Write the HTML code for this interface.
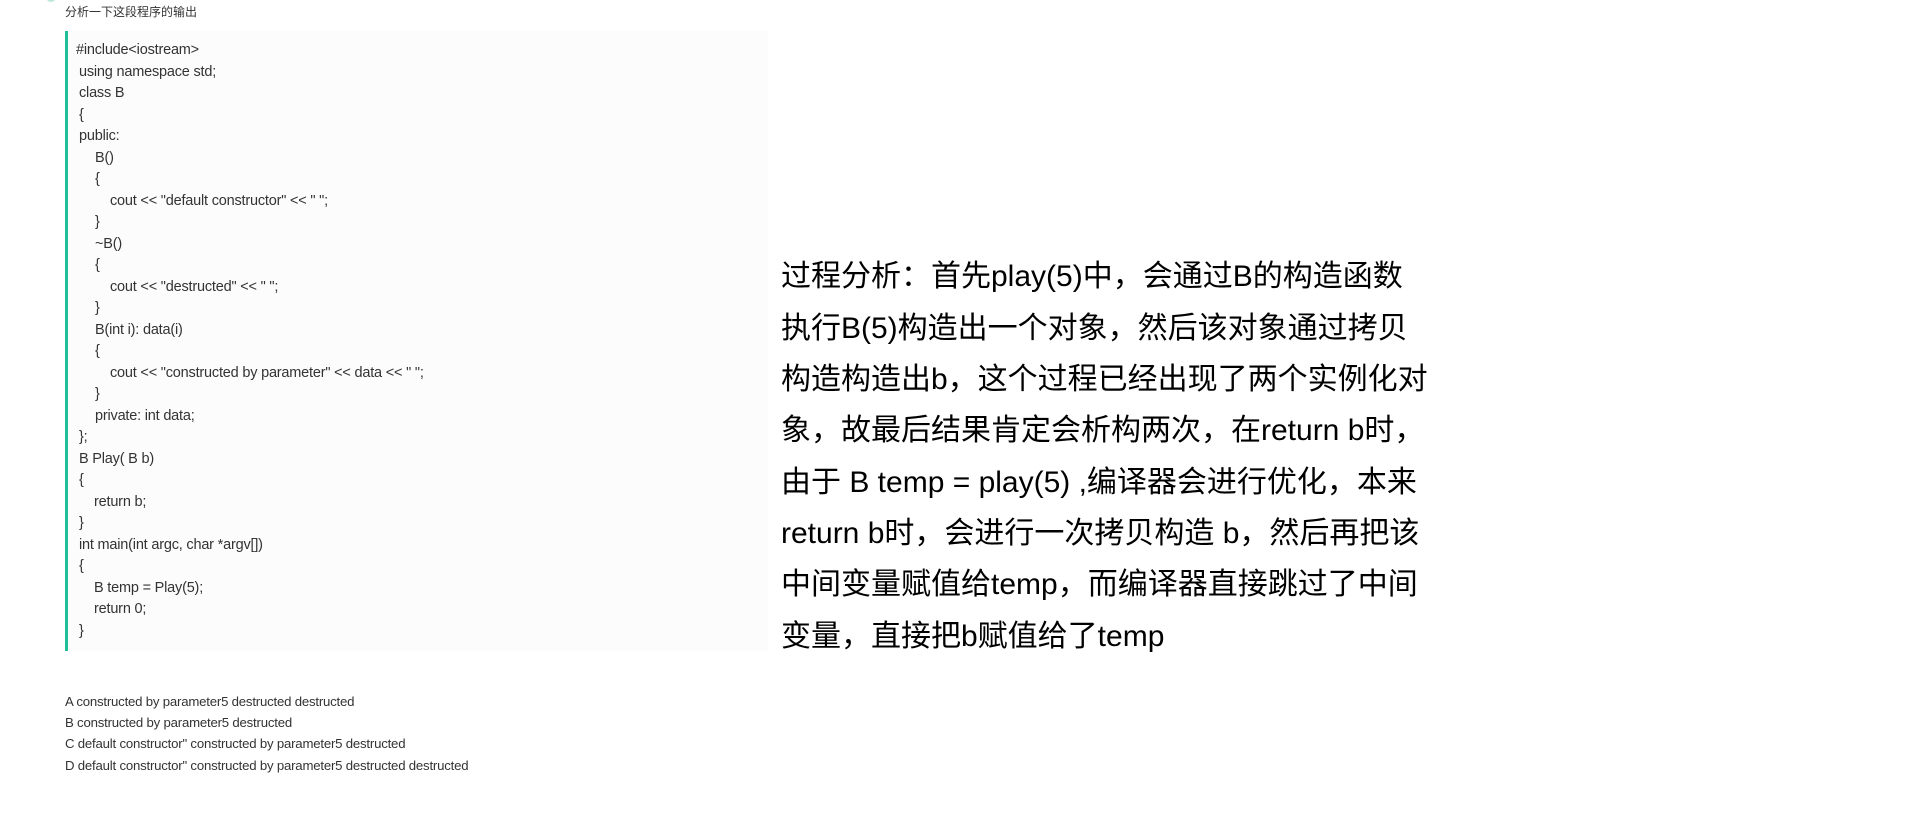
<!DOCTYPE html>
<html><head><meta charset="utf-8"><style>
body{margin:0;width:1914px;height:816px;background:#fff;position:relative;overflow:hidden;font-family:"Liberation Sans","Noto Sans CJK SC",sans-serif;color:#333}
.t{position:absolute;left:65px;top:3px;font-size:12px}
.code{position:absolute;left:65px;top:31px;width:700px;height:620px;background:#fcfcfc;border-left:3px solid #1fbf99}
.l{position:absolute;font-size:14.5px;white-space:pre;line-height:16px;letter-spacing:-0.2px}
.o{position:absolute;left:65px;font-size:13.2px;white-space:nowrap;letter-spacing:-0.2px}
.r{position:absolute;left:781px;font-size:30px;color:#000;white-space:nowrap;font-family:"Liberation Sans","Noto Sans CJK SC",sans-serif}
.dot{position:absolute;left:47px;top:-4px;width:8px;height:6px;border-radius:50%;background:#bfe8dc}
</style></head><body>
<div class="dot"></div>
<div class="t">分析一下这段程序的输出</div>
<div class="code"></div>
<div class="l" style="left:76px;top:42px">#include&lt;iostream&gt;</div>
<div class="l" style="left:79px;top:64px">using namespace std;</div>
<div class="l" style="left:79px;top:85px">class B</div>
<div class="l" style="left:79px;top:107px">{</div>
<div class="l" style="left:79px;top:128px">public:</div>
<div class="l" style="left:95px;top:150px">B()</div>
<div class="l" style="left:95px;top:171px">{</div>
<div class="l" style="left:110px;top:193px">cout &lt;&lt; "default constructor" &lt;&lt; " ";</div>
<div class="l" style="left:95px;top:214px">}</div>
<div class="l" style="left:95px;top:236px">~B()</div>
<div class="l" style="left:95px;top:257px">{</div>
<div class="l" style="left:110px;top:279px">cout &lt;&lt; "destructed" &lt;&lt; " ";</div>
<div class="l" style="left:95px;top:300px">}</div>
<div class="l" style="left:95px;top:322px">B(int i): data(i)</div>
<div class="l" style="left:95px;top:343px">{</div>
<div class="l" style="left:110px;top:365px">cout &lt;&lt; "constructed by parameter" &lt;&lt; data &lt;&lt; " ";</div>
<div class="l" style="left:95px;top:386px">}</div>
<div class="l" style="left:95px;top:408px">private: int data;</div>
<div class="l" style="left:79px;top:429px">};</div>
<div class="l" style="left:79px;top:451px">B Play( B b)</div>
<div class="l" style="left:79px;top:472px">{</div>
<div class="l" style="left:94px;top:494px">return b;</div>
<div class="l" style="left:79px;top:515px">}</div>
<div class="l" style="left:79px;top:537px">int main(int argc, char *argv[])</div>
<div class="l" style="left:79px;top:558px">{</div>
<div class="l" style="left:94px;top:580px">B temp = Play(5);</div>
<div class="l" style="left:94px;top:601px">return 0;</div>
<div class="l" style="left:79px;top:623px">}</div>
<div class="o" style="top:694px">A constructed by parameter5 destructed destructed</div>
<div class="o" style="top:715px">B constructed by parameter5 destructed</div>
<div class="o" style="top:736px">C default constructor" constructed by parameter5 destructed</div>
<div class="o" style="top:758px">D default constructor" constructed by parameter5 destructed destructed</div>
<div class="r" style="top:251px">过程分析：首先play(5)中，会通过B的构造函数</div>
<div class="r" style="top:303px">执行B(5)构造出一个对象，然后该对象通过拷贝</div>
<div class="r" style="top:354px">构造构造出b，这个过程已经出现了两个实例化对</div>
<div class="r" style="top:405px">象，故最后结果肯定会析构两次，在return b时，</div>
<div class="r" style="top:457px">由于 B temp = play(5) ,编译器会进行优化，本来</div>
<div class="r" style="top:508px">return b时，会进行一次拷贝构造 b，然后再把该</div>
<div class="r" style="top:559px">中间变量赋值给temp，而编译器直接跳过了中间</div>
<div class="r" style="top:611px">变量，直接把b赋值给了temp</div>
</body></html>
